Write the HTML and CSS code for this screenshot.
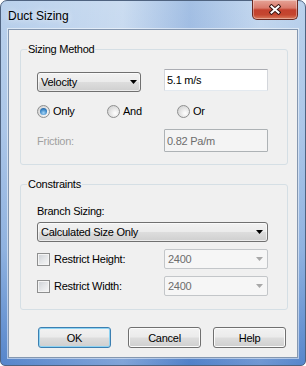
FILE: index.html
```html
<!DOCTYPE html>
<html lang="en">
<head>
    <meta charset="UTF-8">
    <meta name="viewport" content="width=device-width, initial-scale=1.0">
    <title>Duct Sizing</title>
    <link rel="stylesheet" href="styles.css">
</head>
<body>
    <div class="window">
        <div class="titlebar">
            <span class="title">Duct Sizing</span>
            <button class="close-btn" aria-label="Close">
                <svg width="12" height="11" viewBox="0 0 12 11">
                    <path d="M2.5 2.5L9.5 8.5M9.5 2.5L2.5 8.5" stroke="#3b1612" stroke-width="4" stroke-linecap="square"/>
                    <path d="M2.5 2.5L9.5 8.5M9.5 2.5L2.5 8.5" stroke="#ffffff" stroke-width="2" stroke-linecap="square"/>
                </svg>
            </button>
        </div>

        <div class="client">
            <fieldset class="group">
                <legend>Sizing Method</legend>
                <div class="group-body">
                    <div class="field-row">
                        <div class="combo combo-method">
                            <span>Velocity</span>
                            <svg class="arrow" width="7" height="4" viewBox="0 0 7 4"><path d="M0 0h7L3.5 4z"/></svg>
                        </div>
                        <input class="textbox" type="text" value="5.1 m/s">
                    </div>
                    <div class="radio-row">
                        <label class="option"><span class="radio checked"></span>Only</label>
                        <label class="option"><span class="radio"></span>And</label>
                        <label class="option"><span class="radio"></span>Or</label>
                    </div>
                    <div class="field-row friction-row">
                        <span class="label-disabled">Friction:</span>
                        <input class="textbox textbox-disabled" type="text" value="0.82 Pa/m" disabled>
                    </div>
                </div>
            </fieldset>

            <fieldset class="group group-constraints">
                <legend>Constraints</legend>
                <div class="group-body body-constraints">
                    <div class="caption">Branch Sizing:</div>
                    <div class="combo combo-wide">
                        <span>Calculated Size Only</span>
                        <svg class="arrow" width="7" height="4" viewBox="0 0 7 4"><path d="M0 0h7L3.5 4z"/></svg>
                    </div>
                    <div class="field-row check-row">
                        <label class="option"><span class="checkbox"></span>Restrict Height:</label>
                        <div class="combo combo-disabled">
                            <span>2400</span>
                            <svg class="arrow" width="7" height="4" viewBox="0 0 7 4"><path d="M0 0h7L3.5 4z"/></svg>
                        </div>
                    </div>
                    <div class="field-row check-row">
                        <label class="option"><span class="checkbox"></span>Restrict Width:</label>
                        <div class="combo combo-disabled">
                            <span>2400</span>
                            <svg class="arrow" width="7" height="4" viewBox="0 0 7 4"><path d="M0 0h7L3.5 4z"/></svg>
                        </div>
                    </div>
                </div>
            </fieldset>

            <div class="button-bar">
                <button class="btn btn-default">OK</button>
                <button class="btn btn-cancel">Cancel</button>
                <button class="btn btn-help">Help</button>
            </div>
        </div>
    </div>
</body>
</html>
```

FILE: styles.css
```css
* {
    margin: 0;
    padding: 0;
    box-sizing: border-box;
}

body {
    font-family: 'Liberation Sans', Arial, sans-serif;
    font-size: 11px;
    line-height: 14px;
    letter-spacing: -0.25px;
    color: #000;
    background-color: #ffffff;
}

.window {
    width: 306px;
    height: 366px;
    display: flex;
    flex-direction: column;
    padding: 0 7px 7px 7px;
    border: 1px solid #4f6380;
    border-radius: 7px 7px 5px 5px;
    background:
        linear-gradient(90deg, rgba(255, 255, 255, 0) 0%, rgba(255, 255, 255, 0.25) 40%, rgba(60, 110, 190, 0.18) 62%, rgba(255, 255, 255, 0.15) 85%, rgba(255, 255, 255, 0) 100%),
        linear-gradient(180deg, #bad1ec 0%, #abc6e8 35%, #8fb2e0 68%, #5585cb 100%);
}

.titlebar {
    height: 28px;
    display: flex;
    justify-content: space-between;
    align-items: flex-start;
}

.title {
    margin-top: 8px;
    font-size: 12px;
    letter-spacing: 0;
    text-shadow: 0 0 6px rgba(255, 255, 255, 0.9);
}

.close-btn {
    width: 46px;
    height: 20px;
    margin-top: -1px;
    display: flex;
    align-items: center;
    justify-content: center;
    border: 1px solid #6a2a22;
    border-top: none;
    border-radius: 0 0 5px 5px;
    background: linear-gradient(180deg, #e6a497 0%, #d97a6b 42%, #c3412e 52%, #c5462f 78%, #d97c5e 100%);
    box-shadow: inset 0 0 0 1px rgba(255, 255, 255, 0.35);
}

.client {
    flex: 1;
    padding: 12px 9px 0 11px;
    background-color: #f0f0f0;
    border: 1px solid #8497b0;
    box-shadow: 0 0 0 1px rgba(255, 255, 255, 0.5);
}

/* Group boxes */
.group {
    min-width: 0;
    border: 1px solid #d5dfe5;
    border-radius: 3px;
}

.group legend {
    margin-left: 6px;
    padding: 0 1px;
    line-height: 14px;
}

.group-constraints {
    margin-top: 12px;
}

.group-body {
    padding: 13px 18px 12px 16px;
}

.body-constraints {
    padding-bottom: 13px;
}

.field-row {
    display: grid;
    grid-template-columns: 127px 104px;
    align-items: start;
}

.friction-row {
    margin-top: 11px;
    align-items: center;
}

.check-row {
    margin-top: 7px;
    align-items: center;
}

.label-disabled {
    color: #a0a0a0;
}

/* Combo boxes */
.combo {
    height: 20px;
    display: flex;
    align-items: center;
    justify-content: space-between;
    padding: 0 4px 0 3px;
    border: 1px solid #707070;
    border-radius: 3px;
    background: linear-gradient(180deg, #f2f2f2 0%, #ebebeb 48%, #dddddd 52%, #cfcfcf 100%);
    box-shadow: inset 0 0 0 1px rgba(255, 255, 255, 0.6);
}

.combo-method {
    width: 104px;
    margin-top: 3px;
    padding-right: 3px;
}

.combo-wide {
    width: 231px;
    margin-top: 4px;
}

.combo-disabled {
    width: 104px;
    color: #6d6d6d;
    border-color: #c3c6c9;
    border-radius: 2px;
    background: #f6f6f6;
    box-shadow: none;
}

.combo-disabled .arrow {
    fill: #a8a8a8;
}

/* Text boxes */
.textbox {
    width: 104px;
    height: 22px;
    padding: 0 2px;
    font: inherit;
    letter-spacing: inherit;
    color: #000;
    background-color: #ffffff;
    border: 1px solid;
    border-color: #abadb3 #d3d6db #e3e9ef #d3d6db;
    border-radius: 1px;
    outline: none;
}

.textbox-disabled {
    height: 23px;
    color: #6d6d6d;
    -webkit-text-fill-color: #6d6d6d;
    background-color: #f4f4f4;
    border-color: #adb2b5;
    opacity: 1;
}

/* Radios and checkboxes */
.radio-row {
    display: flex;
    align-items: center;
    height: 14px;
    margin-top: 12px;
}

.option {
    display: flex;
    align-items: center;
    gap: 3px;
    width: 70px;
}

.check-row .option {
    gap: 4px;
    width: auto;
}

.radio {
    width: 13px;
    height: 13px;
    display: flex;
    align-items: center;
    justify-content: center;
    border: 1px solid #8e8f8f;
    border-radius: 50%;
    background: radial-gradient(circle at 65% 65%, #ffffff 0%, #e6e6e6 45%, #c9c9c9 100%);
}

.radio.checked::after {
    content: '';
    width: 7px;
    height: 7px;
    border-radius: 50%;
    background: radial-gradient(circle at 50% 70%, #a6d6f7 0%, #3b86c6 55%, #174f8b 100%);
}

.checkbox {
    width: 13px;
    height: 13px;
    border: 1px solid #8e8f8f;
    background: linear-gradient(135deg, #cbcfd4 0%, #e4e6e8 50%, #f7f7f7 100%);
    box-shadow: inset 0 0 0 1px #f4f4f4;
}

.caption {
    height: 14px;
}

/* Dialog buttons */
.button-bar {
    display: flex;
    margin-top: 17px;
    padding-left: 18px;
}

.btn {
    width: 73px;
    height: 21px;
    font: inherit;
    letter-spacing: inherit;
    color: #000;
    border: 1px solid #707070;
    border-radius: 3px;
    background: linear-gradient(180deg, #f2f2f2 0%, #ebebeb 48%, #dddddd 52%, #cfcfcf 100%);
    box-shadow: inset 0 0 0 1px #fbfbfb;
}

.btn-default {
    border-color: #3c7fb1;
    box-shadow: inset 0 0 0 1px #8ed3f3;
}

.btn-cancel {
    margin-left: 17px;
}

.btn-help {
    margin-left: 12px;
}
```
